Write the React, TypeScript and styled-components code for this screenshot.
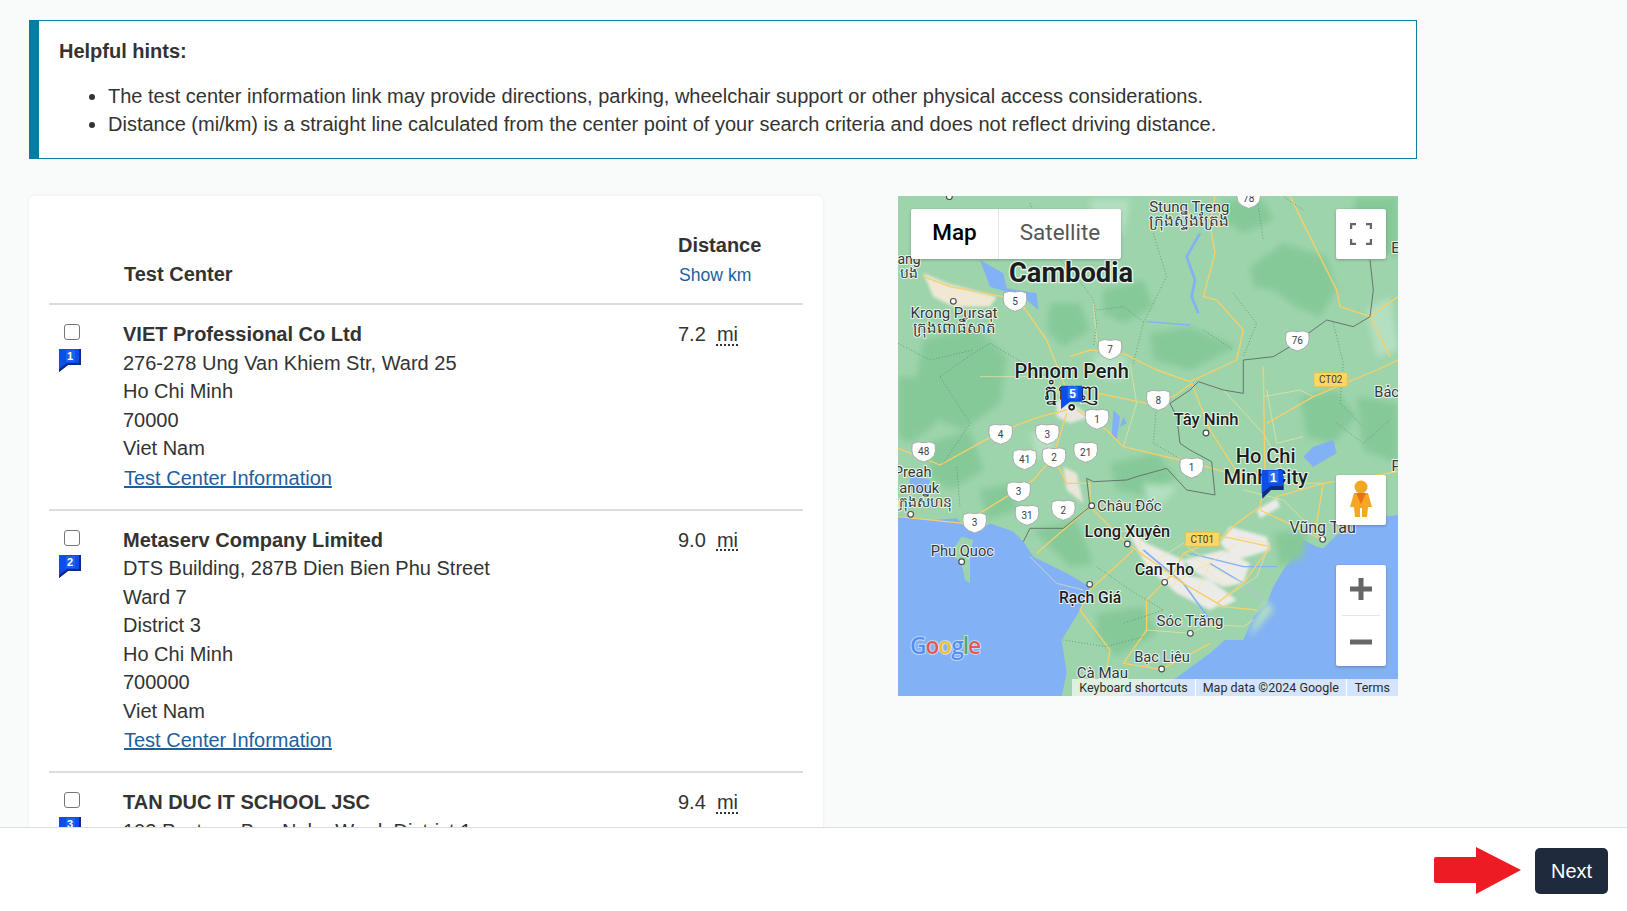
import React from "react";
import styled, { createGlobalStyle } from "styled-components";

const Global = createGlobalStyle`
  html, body { margin: 0; padding: 0; height: 100%; background: #f9fafa; }
  #root { height: 100%; }
  * { box-sizing: border-box; }
`;

const Page = styled.div`
  height: 911px;
  display: flex;
  flex-direction: column;
  overflow: hidden;
  font-family: "Liberation Sans", Arial, sans-serif;
  font-size: 20px;
  line-height: 28.57px;
  color: #333;
  background: #f9fafa;
`;
const Main = styled.main`
  flex: 1;
  min-height: 0;
  overflow: hidden;
  padding: 20px 0 0 29px;
`;
const Hints = styled.section`
  width: 1388px;
  height: 139px;
  background: #fff;
  border: 1px solid #0f7c98;
  border-left: 10px solid #007fa3;
  padding: 16px 19px 16px 20px;
`;
const HintTitle = styled.div`
  font-weight: 700;
  margin-bottom: 16px;
`;
const HintList = styled.ul`
  margin: 0;
  padding: 0 0 0 49px;
`;
const Columns = styled.div`
  display: flex;
  align-items: flex-start;
  gap: 75px;
  margin-top: 37px;
`;
const Card = styled.section`
  width: 794px;
  flex: none;
  background: #fff;
  border-radius: 6px;
  box-shadow: 0 0 4px rgba(0, 0, 0, 0.06);
  padding: 35px 20px 0 20px;
`;
const HeadRow = styled.div`
  display: grid;
  grid-template-columns: 74px 555px 1fr;
  align-items: end;
  padding-bottom: 14px;
  border-bottom: 2px solid #ddd;
`;
const HeadCell = styled.div<{ $col: number }>`
  grid-column: ${(p) => p.$col};
  font-weight: 700;
  padding-left: ${(p) => (p.$col === 2 ? "1px" : "0")};
  padding-bottom: ${(p) => (p.$col === 2 ? "1px" : "0")};
`;
const ShowKm = styled.a`
  display: block;
  font-weight: 400;
  font-size: 17.6px;
  color: #1f5f9e;
  padding-left: 1px;
  margin-top: 1px;
`;
const Row = styled.div`
  display: grid;
  grid-template-columns: 74px 555px 1fr;
  padding: 15px 0 16px;
  border-bottom: 2px solid #ddd;
`;
const MarkCell = styled.div`
  display: flex;
  flex-direction: column;
  align-items: flex-start;
  padding: 4px 0 0 10px;
`;
const Check = styled.input.attrs({ type: "checkbox" })`
  width: 16px;
  height: 16px;
  margin: 0 0 9px 5px;
  appearance: none;
  background: #fff;
  border: 1.5px solid #767676;
  border-radius: 3px;
`;
const Name = styled.div`
  font-weight: 700;
`;
const InfoLink = styled.a`
  display: inline-block;
  margin-top: 1px;
  padding-left: 1px;
  color: #1f5f9e;
  text-decoration: underline;
`;
const Dist = styled.div`
  white-space: pre;
`;
const Abbr = styled.abbr`
  text-decoration: underline dotted #333;
  text-underline-offset: 3px;
`;
const MapBox = styled.div`
  position: relative;
  width: 500px;
  height: 500px;
  flex: none;
  overflow: hidden;
  background: #8ab4f8;
`;
const MapSvg = styled.svg`
  display: block;
  width: 500px;
  height: 500px;
`;
const Label = styled.text<{ $w?: number; $halo?: string }>`
  font-family: Roboto, "Noto Sans", sans-serif;
  font-weight: ${(p) => p.$w ?? 400};
  fill: ${(p) => (p.$w && p.$w > 400 ? "#1c1d1f" : "#34373a")};
  stroke: #fff;
  stroke-width: ${(p) => p.$halo ?? "6"};
  stroke-opacity: 0.8;
  stroke-linejoin: round;
  paint-order: stroke;
  text-anchor: middle;
`;
const ShieldText = styled.text`
  font-family: Roboto, sans-serif;
  font-size: 30px;
  fill: #3c4043;
  text-anchor: middle;
`;
const MapTypes = styled.div`
  position: absolute;
  left: 13px;
  top: 13px;
  height: 50px;
  display: flex;
  background: #fff;
  box-shadow: 0 1px 3px rgba(0, 0, 0, 0.25);
  border-radius: 2px;
  font-family: Roboto, sans-serif;
  font-size: 22.5px;
  line-height: 47px;
`;
const MapType = styled.div<{ $active?: boolean }>`
  width: ${(p) => (p.$active ? "87px" : "123px")};
  text-align: center;
  color: ${(p) => (p.$active ? "#000" : "#565656")};
  font-weight: ${(p) => (p.$active ? 500 : 400)};
  border-left: ${(p) => (p.$active ? "none" : "1px solid #e6e6e6")};
`;
const MapBtn = styled.div<{ $top: number }>`
  position: absolute;
  right: 12px;
  top: ${(p) => p.$top}px;
  width: 50px;
  height: 50px;
  background: #fff;
  border-radius: 2px;
  box-shadow: 0 1px 3px rgba(0, 0, 0, 0.25);
  display: flex;
  align-items: center;
  justify-content: center;
`;
const Zoom = styled.div`
  position: absolute;
  right: 12px;
  top: 369px;
  width: 50px;
  height: 101px;
  background: #fff;
  border-radius: 2px;
  box-shadow: 0 1px 3px rgba(0, 0, 0, 0.25);
  display: flex;
  flex-direction: column;
  align-items: center;
  justify-content: space-between;
  padding: 13px 0;
`;
const ZoomRule = styled.div`
  width: 38px;
  height: 1px;
  background: #e6e6e6;
`;
const Attribution = styled.div`
  position: absolute;
  right: 0;
  bottom: 0;
  height: 17px;
  display: flex;
  background: rgba(255, 255, 255, 0.65);
  font-family: Roboto, sans-serif;
  font-size: 12.5px;
  line-height: 17px;
  color: #2b2b2b;
`;
const AttrItem = styled.span<{ $last?: boolean }>`
  padding: ${(p) => (p.$last ? "0 8px 0 8px" : "0 7px")};
  border-right: ${(p) => (p.$last ? "none" : "1px solid #fff")};
`;
const Footer = styled.footer`
  height: 84px;
  flex: none;
  background: #fff;
  border-top: 1px solid #ddd;
  display: flex;
  align-items: center;
  justify-content: flex-end;
  gap: 14px;
  padding: 3px 19px 0 0;
`;
const Arrow = styled.svg`
  display: block;
  margin-bottom: 2px;
`;
const Next = styled.button`
  width: 73px;
  height: 46px;
  background: #1f2a3c;
  color: #fff;
  border: none;
  border-radius: 5px;
  font: 20px "Liberation Sans", Arial, sans-serif;
  padding: 0;
`;

const FlagWrap = styled.svg`
  display: block;
  width: 22px;
  height: 23px;
`;
const FlagNum = styled.text`
  font-family: "Liberation Sans", sans-serif;
  font-size: 11px;
  font-weight: 700;
  fill: #fff;
  text-anchor: middle;
`;
const Flag = ({ n }: { n: number }) => (
  <FlagWrap viewBox="0 0 22 23">
    <path d="M0 0H22V16H9L0 23Z" fill="#0b4fe8" />
    <path d="M0 23V20L8 14H20V0H22V16H9Z" fill="#0a2c86" />
    <rect x="7" y="1" width="9" height="12" fill="#1a63f0" />
    <FlagNum x="11" y="11">{n}</FlagNum>
  </FlagWrap>
);

const Shield = ({ x, y, n }: { x: number; y: number; n: string }) => (
  <g transform={`translate(${x} ${y})`}>
    <path
      d="M-34 -24 Q-18 -33 0 -27 Q18 -33 34 -24 Q38 -4 32 11 Q20 27 0 31 Q-20 27 -32 11 Q-38 -4 -34 -24Z"
      fill="#fff"
      stroke="#9a9f9c"
      strokeWidth="2.5"
    />
    <ShieldText y="11">{n}</ShieldText>
  </g>
);

const Badge = ({ x, y, w, n }: { x: number; y: number; w: number; n: string }) => (
  <g>
    <rect x={x} y={y} width={w} height="42" rx="3" fill="#fdd663" stroke="#e8bb3a" strokeWidth="2" />
    <ShieldText x={x + w / 2} y={y + 32}>{n}</ShieldText>
  </g>
);

const Dot = ({ x, y }: { x: number; y: number }) => (
  <circle cx={x} cy={y} r="8.5" fill="#fff" stroke="#4a4f4d" strokeWidth="3.5" />
);

const MapMarker = ({ x, y, n, stack }: { x: number; y: number; n: string; stack?: boolean }) => (
  <g transform={`translate(${x} ${y})`}>
    {stack && <path d="M0 18H66V60H28L2 86Z" fill="#0a2c86" />}
    <path d="M0 0H64V48H27L0 70Z" fill="#0b4fe8" />
    <rect x="20" y="3" width="30" height="36" fill="#2a6ff0" />
    <text x="35" y="36" fontFamily="Liberation Sans, sans-serif" fontSize="36" fontWeight="700" fill="#fff" textAnchor="middle">{n}</text>
  </g>
);

const DarkPatches = [
  "M1080 230L1180 160L1310 200L1340 300L1290 380L1220 350L1150 300L1090 290Z",
  "M1000 30L1120 30L1150 90L1060 130L1000 90Z",
  "M1400 20L1524 20L1524 200L1440 180L1380 100Z",
  "M100 450L260 410L350 500L330 640L220 720L120 680L80 560Z",
  "M24 560L100 560L140 700L60 760L24 740Z",
  "M480 340L570 340L600 420L520 470L470 420Z",
  "M640 300L760 270L790 350L700 400L640 370Z",
  "M1230 620L1340 600L1400 680L1330 760L1250 740Z",
  "M1400 620L1524 640L1524 820L1420 780Z",
  "M120 760L240 720L280 840L180 900L120 860Z",
  "M780 430L900 410L1040 470L900 540L790 510Z",
  "M270 900L370 880L380 960L290 990Z",
  "M660 820L800 790L860 860L780 920L680 900Z",
  "M1150 1030L1250 1020L1240 1100L1170 1130Z",
  "M430 1020L560 990L610 1120L540 1130Z",
  "M620 1270L760 1250L800 1330L680 1400L620 1340Z",
];
const LightPatches = [
  "M600 30L720 30L700 130L620 150Z",
  "M1430 360L1500 320L1524 480L1460 500Z",
  "M760 880L860 890L820 940L770 930Z",
  "M420 730L500 720L490 800L440 800Z",
  "M610 490L710 500L700 570L620 560Z",
  "M1090 1300L1130 1230L1150 1260L1080 1340Z",
];
const Urban = [
  "M700 1000L770 1060L880 1110L900 1180L1000 1240L960 1260L860 1210L770 1130Z",
  "M1020 1010L1130 1040L1140 1080L1040 1110L990 1060Z",
  "M880 1110L1000 1080L1080 1120L1060 1180L1000 1190L920 1150Z",
  "M860 1150L960 1170L1040 1230L1000 1250L900 1220Z",
  "M1100 960L1160 925L1170 950L1110 985Z",
];
const Roads = [
  "M24 775L150 825L250 770L340 720L450 680L530 660",
  "M560 660L650 720L700 770L870 810L950 830L1050 860L1130 880",
  "M540 500L600 480L700 490L800 540L900 575L1040 510L1060 420L980 330L940 320L975 190L960 100L975 18",
  "M100 260L180 290L340 320L400 350L470 450L530 600",
  "M625 610L770 640L850 620L905 580L960 720L1050 860",
  "M1120 530L1125 880L1110 950L1040 1000L1000 1040L880 1090L850 1150L820 1180",
  "M1130 700L1270 620L1460 540L1524 510",
  "M1130 880L1300 880L1524 845",
  "M1440 380L1524 320",
  "M1350 350L1440 380L1500 500",
  "M1200 18L1240 100L1340 300L1350 350",
  "M530 670L490 800L530 880L600 880L600 950L710 1060L880 1180L1000 1250L1100 1260",
  "M730 1080L600 1200L570 1260L660 1380L650 1440",
  "M820 1180L770 1230L770 1320L700 1420L815 1438L960 1360",
  "M24 980L220 1000L350 920L430 870L490 800",
  "M1300 880L1280 1000L1300 1050L1110 960",
  "M440 1090L600 950",
  "M1000 1040L1140 1070L1060 1180L980 1240",
  "M1160 920L1300 880",
];
const Minor = [
  "M270 560L470 560L540 660",
  "M720 520L740 640L700 770",
  "M1000 600L1120 730L1200 880",
  "M1040 1040L1140 1060L1100 1160L980 1240",
  "M880 1090L1060 1180L1120 1230",
  "M800 1110L880 1060L960 1120L920 1210",
  "M760 1110L860 1170L960 1120L1040 1060",
  "M840 1190L930 1130L1020 1190",
  "M1130 600L1160 760L1240 740",
  "M1060 900L1180 930L1250 1000",
  "M640 1030L740 1020L760 1100",
  "M920 1300L1060 1310L1090 1290",
  "M420 1100L500 1180L580 1200",
  "M770 1320L900 1330L1000 1280",
  "M1120 620L1230 600L1270 620",
  "M610 340L620 450L640 480",
];
const Provinces = [
  "M420 40L470 170L560 260L610 330L620 400L610 470",
  "M790 130L830 260L760 400L730 520",
  "M1030 310L1100 400L1060 500",
  "M1340 700L1420 760L1500 690",
  "M150 560L250 490L300 460L470 560",
  "M24 460L120 510L250 480",
  "M160 820L240 700L150 560",
  "M800 640L790 760L860 800",
  "M1240 60L1180 20",
  "M1100 18L1120 150",
  "M1330 400L1360 520L1350 640L1420 710",
  "M620 1130L720 1200L820 1260L700 1300",
  "M520 1350L650 1370L760 1340",
  "M200 830L210 950",
  "M620 360L700 350L760 395",
  "M940 420L1030 480",
];

export default function App() {
  return (
    <Page>
      <Global />
      <Main>
        <Hints>
          <HintTitle>Helpful hints:</HintTitle>
          <HintList>
            <li>The test center information link may provide directions, parking, wheelchair support or other physical access considerations.</li>
            <li>Distance (mi/km) is a straight line calculated from the center point of your search criteria and does not reflect driving distance.</li>
          </HintList>
        </Hints>
        <Columns>
          <Card>
            <HeadRow>
              <HeadCell $col={2}>Test Center</HeadCell>
              <HeadCell $col={3}>
                Distance
                <ShowKm>Show km</ShowKm>
              </HeadCell>
            </HeadRow>
            <Row>
              <MarkCell><Check /><Flag n={1} /></MarkCell>
              <div>
                <Name>VIET Professional Co Ltd</Name>
                <div>276-278 Ung Van Khiem Str, Ward 25</div>
                <div>Ho Chi Minh</div>
                <div>70000</div>
                <div>Viet Nam</div>
                <InfoLink>Test Center Information</InfoLink>
              </div>
              <Dist>7.2{"  "}<Abbr>mi</Abbr></Dist>
            </Row>
            <Row>
              <MarkCell><Check /><Flag n={2} /></MarkCell>
              <div>
                <Name>Metaserv Company Limited</Name>
                <div>DTS Building, 287B Dien Bien Phu Street</div>
                <div>Ward 7</div>
                <div>District 3</div>
                <div>Ho Chi Minh</div>
                <div>700000</div>
                <div>Viet Nam</div>
                <InfoLink>Test Center Information</InfoLink>
              </div>
              <Dist>9.0{"  "}<Abbr>mi</Abbr></Dist>
            </Row>
            <Row>
              <MarkCell><Check /><Flag n={3} /></MarkCell>
              <div>
                <Name>TAN DUC IT SCHOOL JSC</Name>
                <div>102 Pasteur, Ben Nghe Ward, District 1</div>
              </div>
              <Dist>9.4{"  "}<Abbr>mi</Abbr></Dist>
            </Row>
          </Card>
          <MapBox>
            <MapSvg viewBox="24 18 1500 1500">
              <defs>
                <filter id="soft" x="-10%" y="-10%" width="120%" height="120%">
                  <feGaussianBlur stdDeviation="10" />
                </filter>
                <filter id="softer" x="-10%" y="-10%" width="120%" height="120%">
                  <feGaussianBlur stdDeviation="4" />
                </filter>
              </defs>
              <rect x="24" y="18" width="1500" height="1500" fill="#82b1f5" />
              <path
                d="M24 18H1524V975L1400 990L1340 1035L1300 1075L1280 1070L1240 1050L1180 1140L1150 1190L1130 1240L1090 1280L1060 1350L1005 1350L960 1390L850 1470L760 1500L690 1518H515L530 1450L515 1350L570 1260L600 1190L540 1155L480 1125L430 1100L400 1055L370 1025L300 1000L260 1025L225 1012L200 985L130 990L60 985L24 975Z"
                fill="#9dd4ac"
              />
              <path d="M215 1040L250 1050L240 1095L240 1180L225 1170L215 1120L180 1090Z" fill="#9dd4ac" />
              <g fill="#86c998" filter="url(#soft)">
                {DarkPatches.map((d) => <path key={d} d={d} />)}
              </g>
              <g fill="#b4e0c1" filter="url(#soft)">
                {LightPatches.map((d) => <path key={d} d={d} />)}
              </g>
              <path d="M100 250L170 280L320 320L300 350L190 350L130 320Z" fill="#f0e8d2" filter="url(#softer)" />
              <path d="M500 630L560 650L600 680L540 700L500 680Z" fill="#e9e6df" filter="url(#softer)" />
              <path d="M520 830L560 850L580 940L530 900Z" fill="#ece6d8" filter="url(#softer)" />
              <g fill="#ecebe7" filter="url(#softer)">
                {Urban.map((d) => <path key={d} d={d} />)}
              </g>
              <g fill="#82b1f5">
                <path d="M270 210L340 250L350 295L440 310L445 360L400 320L300 290Z" />
                <path d="M60 850L120 870L110 910L60 900Z" />
                <path d="M1270 770L1330 750L1340 790L1270 830L1240 800Z" />
                <path d="M670 660L690 680L680 750L665 740Z" />
                <path d="M700 680L710 700L690 710Z" />
              </g>
              <path d="M930 130L890 200L915 270L905 320L925 370" fill="none" stroke="#82b1f5" strokeWidth="8" />
              <path d="M770 395L900 405" fill="none" stroke="#82b1f5" strokeWidth="4" />
              <path d="M760 1080L880 1180L960 1290" fill="none" stroke="#82b1f5" strokeWidth="5" />
              <path d="M900 1090L1060 1130L1160 1130" fill="none" stroke="#82b1f5" strokeWidth="4" />
              <path d="M960 1120L1060 1180L1120 1230" fill="none" stroke="#82b1f5" strokeWidth="4" />
              <g fill="none" stroke="#f6e3a0" strokeWidth="2">
                {Minor.map((d) => <path key={d} d={d} />)}
              </g>
              <g fill="none" stroke="#f7cf68" strokeWidth="4" strokeLinejoin="round">
                {Roads.map((d) => <path key={d} d={d} />)}
              </g>
              <g fill="none" stroke="#5d7468" strokeWidth="2" strokeDasharray="3 6">
                {Provinces.map((d) => <path key={d} d={d} />)}
              </g>
              <path
                d="M400 1055L420 1015L520 1015L600 950L590 865L610 875L710 870L740 860L830 835L890 900L975 915L965 815L900 780L870 760L860 680L840 640L900 600L925 575L1000 600L1060 610L1060 510L1150 500L1200 470L1310 390L1390 410L1440 380L1450 300L1440 210"
                fill="none"
                stroke="#66756e"
                strokeWidth="3"
              />

              <Shield x={375} y={333} n="5" />
              <Shield x={660} y={478} n="7" />
              <Shield x={1222} y={452} n="76" />
              <Shield x={805} y={630} n="8" />
              <Shield x={621} y={687} n="1" />
              <Shield x={332} y={732} n="4" />
              <Shield x={472} y={732} n="3" />
              <Shield x={101} y={785} n="48" />
              <Shield x={404} y={808} n="41" />
              <Shield x={492} y={803} n="2" />
              <Shield x={587} y={786} n="21" />
              <Shield x={905} y={833} n="1" />
              <Shield x={386} y={905} n="3" />
              <Shield x={254} y={998} n="3" />
              <Shield x={411} y={975} n="31" />
              <Shield x={520} y={960} n="2" />
              <Shield x={1076} y={24} n="78" />
              <Badge x={1272} y={548} w={100} n="CT02" />
              <Badge x={886} y={1027} w={102} n="CT01" />

              <Dot x={190} y={334} />
              <Dot x={948} y={729} />
              <Dot x={605} y={947} />
              <Dot x={712} y={1062} />
              <Dot x={824} y={1177} />
              <Dot x={599} y={1183} />
              <Dot x={901} y={1330} />
              <Dot x={815} y={1437} />
              <Dot x={1298} y={1048} />
              <Dot x={62} y={973} />
              <Dot x={215} y={1115} />
              <Dot x={178} y={20} />

              <Label x={898} y={66} fontSize={45}>Stung Treng</Label>
              <Label x={898} y={108} fontSize={46}>ក្រុងស្ទឹងត្រែង</Label>
              <Label x={543} y={276} fontSize={82} $w={700} $halo="8">Cambodia</Label>
              <Label x={192} y={384} fontSize={45}>Krong Pursat</Label>
              <Label x={192} y={428} fontSize={45}>ក្រុងពោធិ៍សាត់</Label>
              <Label x={545} y={565} fontSize={60} $w={500}>Phnom Penh</Label>
              <Label x={545} y={630} fontSize={64} $w={500}>ភ្នំពេញ</Label>
              <Label x={948} y={704} fontSize={50} $w={500}>Tây Ninh</Label>
              <Label x={1127} y={820} fontSize={60} $w={500}>Ho Chi</Label>
              <Label x={1127} y={882} fontSize={60} $w={500}>Minh City</Label>
              <Label x={1490} y={622} fontSize={44}>Bảc</Label>
              <Label x={1516} y={188} fontSize={44}>E</Label>
              <Label x={1518} y={842} fontSize={44}>P</Label>
              <Label x={57} y={222} fontSize={42}>ang</Label>
              <Label x={58} y={264} fontSize={42}>បង</Label>
              <Label x={68} y={862} fontSize={44}>Preah</Label>
              <Label x={88} y={908} fontSize={44}>anouk</Label>
              <Label x={100} y={952} fontSize={42}>ក្រុងសីហនុ</Label>
              <Label x={718} y={964} fontSize={45}>Châu Đốc</Label>
              <Label x={712} y={1040} fontSize={49} $w={500}>Long Xuyên</Label>
              <Label x={823} y={1155} fontSize={48} $w={500}>Can Tho</Label>
              <Label x={600} y={1240} fontSize={47} $w={500}>Rạch Giá</Label>
              <Label x={900} y={1309} fontSize={45}>Sóc Trăng</Label>
              <Label x={816} y={1416} fontSize={44}>Bạc Liêu</Label>
              <Label x={637} y={1464} fontSize={45}>Cà Mau</Label>
              <Label x={1298} y={1028} fontSize={48}>Vũng Tàu</Label>
              <Label x={217} y={1098} fontSize={44}>Phu Quoc</Label>

              <circle cx="545" cy="652" r="12" fill="#fff" />
              <circle cx="545" cy="652" r="10" fill="#222" />
              <circle cx="545" cy="652" r="4" fill="#fff" />
              <MapMarker x={513} y={587} n="5" />
              <MapMarker x={1115} y={840} n="1" stack />

              <text x="60" y="1392" fontFamily="Open Sans, sans-serif" fontSize="68" fontWeight="600" stroke="#fff" strokeOpacity="0.6" strokeWidth="5" paintOrder="stroke" fillOpacity="0.85" letterSpacing="-3">
                <tspan fill="#4285f4">G</tspan>
                <tspan fill="#ea4335">o</tspan>
                <tspan fill="#fbbc05">o</tspan>
                <tspan fill="#4285f4">g</tspan>
                <tspan fill="#34a853">l</tspan>
                <tspan fill="#ea4335">e</tspan>
              </text>
            </MapSvg>
            <MapTypes>
              <MapType $active>Map</MapType>
              <MapType>Satellite</MapType>
            </MapTypes>
            <MapBtn $top={13}>
              <svg width="22" height="22" viewBox="0 0 22 22" fill="none" stroke="#666" strokeWidth="2.4">
                <path d="M1 6V1H6M16 1H21V6M21 16V21H16M6 21H1V16" />
              </svg>
            </MapBtn>
            <MapBtn $top={279}>
              <svg width="24" height="40" viewBox="0 0 24 40">
                <circle cx="12" cy="7" r="6.5" fill="#f5a623" />
                <path d="M5 13H19L23 27L19 27L18 37H13V28H11V37H6L5 27L1 27Z" fill="#f5a623" />
                <path d="M7 13H17L12 24Z" fill="#e8711a" />
              </svg>
            </MapBtn>
            <Zoom>
              <svg width="22" height="22" viewBox="0 0 22 22"><path d="M11 0V22M0 11H22" stroke="#666" strokeWidth="5" /></svg>
              <ZoomRule />
              <svg width="22" height="22" viewBox="0 0 22 22"><path d="M0 11H22" stroke="#666" strokeWidth="5" /></svg>
            </Zoom>
            <Attribution>
              <AttrItem>Keyboard shortcuts</AttrItem>
              <AttrItem>Map data ©2024 Google</AttrItem>
              <AttrItem $last>Terms</AttrItem>
            </Attribution>
          </MapBox>
        </Columns>
      </Main>
      <Footer>
        <Arrow width="87" height="47" viewBox="0 0 87 47">
          <path d="M2 10H42V0L87 23L42 47V36H2Q0 36 0 34V12Q0 10 2 10Z" fill="#ed1c24" />
        </Arrow>
        <Next>Next</Next>
      </Footer>
    </Page>
  );
}
